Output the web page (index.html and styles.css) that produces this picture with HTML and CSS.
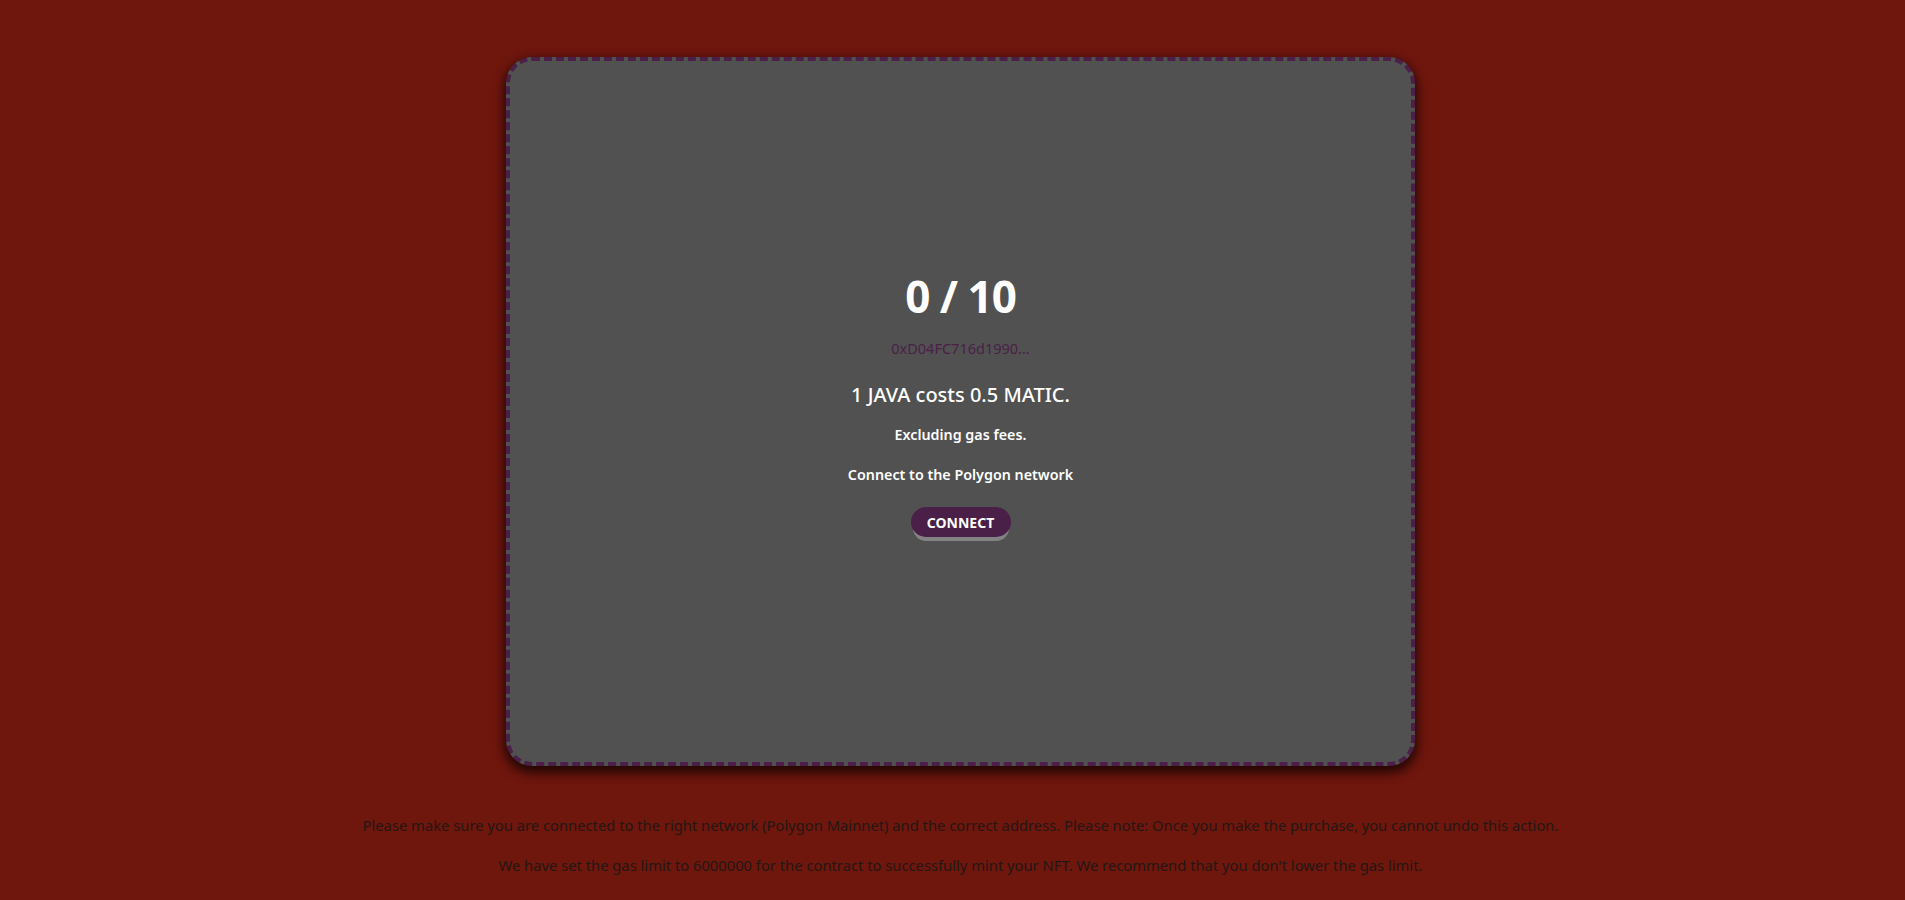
FILE: index.html
```html
<!DOCTYPE html>
<html lang="en">
<head>
<meta charset="utf-8">
<title>Mint</title>
<link rel="stylesheet" href="styles.css">
</head>
<body>
<main class="screen">
  <div class="wrap">
    <section class="card">
      <h1 class="supply">0 / 10</h1>
      <a class="address" href="#">0xD04FC716d1990...</a>
      <h2 class="price">1 JAVA costs 0.5 MATIC.</h2>
      <p class="note">Excluding gas fees.</p>
      <p class="note connect-text">Connect to the Polygon network</p>
      <button class="btn" type="button">CONNECT</button>
    </section>
  </div>
  <div class="footer">
    <p class="foot-line">Please make sure you are connected to the right network (Polygon Mainnet) and the correct address. Please note: Once you make the purchase, you cannot undo this action.</p>
    <p class="foot-line">We have set the gas limit to 6000000 for the contract to successfully mint your NFT. We recommend that you don't lower the gas limit.</p>
  </div>
</main>
</body>
</html>
```
FILE: styles.css
```css
html, body {
  margin: 0;
  padding: 0;
}
body {
  background: #6f160d;
  font-family: "Noto Sans", "Open Sans", sans-serif;
  height: 900px;
  overflow: hidden;
}
.screen {
  display: flex;
  flex-direction: column;
}
.wrap {
  display: flex;
  justify-content: center;
  padding: 57px 0 0 16px;
}
.card {
  box-sizing: border-box;
  width: 909px;
  height: 709px;
  background: #515151;
  border: 4px dashed #4b1f48;
  border-radius: 26px;
  box-shadow: 0 5px 11px 2px rgba(0, 0, 0, 0.7);
  display: flex;
  flex-direction: column;
  align-items: center;
  padding-top: 207px;
}
.supply {
  margin: 0;
  font-size: 44px;
  line-height: 56px;
  font-weight: 700;
  letter-spacing: -1px;
  color: #ffffff;
}
.address {
  margin-top: 14px;
  font-size: 14.5px;
  line-height: 20px;
  color: #4b1f48;
  text-decoration: none;
}
.price {
  margin: 23px 0 0;
  font-size: 20px;
  line-height: 28px;
  font-weight: 500;
  color: #ffffff;
}
.note {
  margin: 16px 0 0;
  font-size: 14.3px;
  line-height: 20px;
  font-weight: 600;
  color: #ffffff;
}
.connect-text {
  margin-top: 20px;
}
.btn {
  margin-top: 22px;
  width: 100px;
  height: 30px;
  padding: 0;
  border: none;
  border-radius: 50px;
  background: #4a1f48;
  color: #ffffff;
  font-family: inherit;
  font-size: 14px;
  font-weight: 700;
  box-shadow: 0 6px 0 -2px rgba(250, 250, 250, 0.3);
  cursor: pointer;
}
.footer {
  display: flex;
  flex-direction: column;
  align-items: center;
  margin-top: 47px;
  padding-left: 16px;
}
.foot-line {
  margin: 0 0 16px;
  font-size: 14.75px;
  line-height: 24px;
  color: #241614;
  text-align: center;
}
```
